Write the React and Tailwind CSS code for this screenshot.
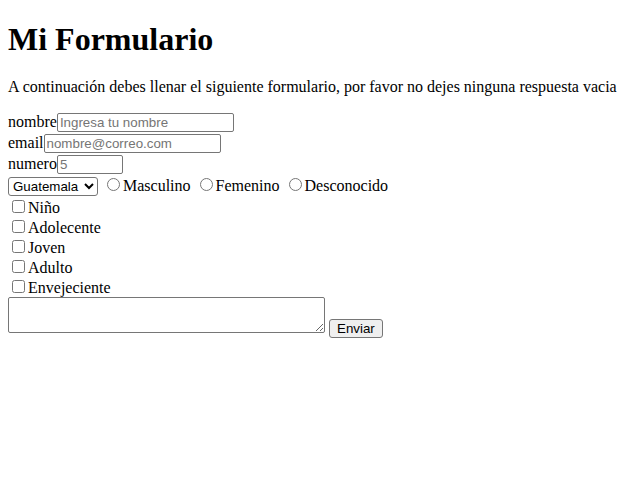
import React from "react";

const inputCls =
  "my-[1px] border border-[#767676] rounded-[2px] bg-white px-[2px] py-[1px] text-[13.3333px] font-['Liberation_Sans',Arial,sans-serif] leading-[normal] placeholder:text-[#757575] align-baseline";

export default function App() {
  const edades = ["Niño", "Adolecente", "Joven", "Adulto", "Envejeciente"];
  const generos = ["Masculino", "Femenino", "Desconocido"];

  return (
    <div className="min-h-[469px] m-2 text-base leading-[normal] text-black font-['Liberation_Serif','Times_New_Roman',serif]">
      <h1 className="mt-[21px] mb-[20px] text-[32px] font-bold leading-[normal]">Mi Formulario</h1>
      <p className="my-4">
        A continuación debes llenar el siguiente formulario, por favor no dejes ninguna respuesta vacia
      </p>
      <form onSubmit={(e) => e.preventDefault()}>
        <label>nombre</label>
        <input type="text" placeholder="Ingresa tu nombre" className={`${inputCls} w-[177px]`} />
        <br />
        <label>email</label>
        <input type="email" placeholder="nombre@correo.com" className={`${inputCls} w-[177px]`} />
        <br />
        <label>numero</label>
        <input type="text" placeholder="5" className={`${inputCls} w-[66px]`} />
        <br />
        <select className="my-[1px] w-[90px] h-[19px] border border-[#767676] rounded-[3px] bg-white text-[13.3333px] font-['Liberation_Sans',Arial,sans-serif] text-black">
          <option>Guatemala</option>
          <option>Honduras</option>
          <option>El Salvador</option>
        </select>{" "}
        {generos.map((g) => (
          <React.Fragment key={g}>
            <input type="radio" name="genero" className="w-[13px] h-[13px] mt-[3px] mr-[3px] ml-[5px]" />
            {g}{" "}
          </React.Fragment>
        ))}
        <br />
        {edades.map((e) => (
          <React.Fragment key={e}>
            <input type="checkbox" className="w-[13px] h-[13px] mt-[3px] mr-[3px] mb-[3px] ml-1" />
            {e}
            <br />
          </React.Fragment>
        ))}
        <textarea className="w-[317px] h-[36px] border border-[#767676] rounded-[2px] p-[2px] text-[13.3333px] font-['Liberation_Mono',monospace] resize"></textarea>{" "}
        <button className="border border-[#767676] rounded-[3px] bg-[#efefef] px-[7px] py-[1px] text-[13.3333px] font-['Liberation_Sans',Arial,sans-serif] text-black leading-[normal]">
          Enviar
        </button>
      </form>
    </div>
  );
}
